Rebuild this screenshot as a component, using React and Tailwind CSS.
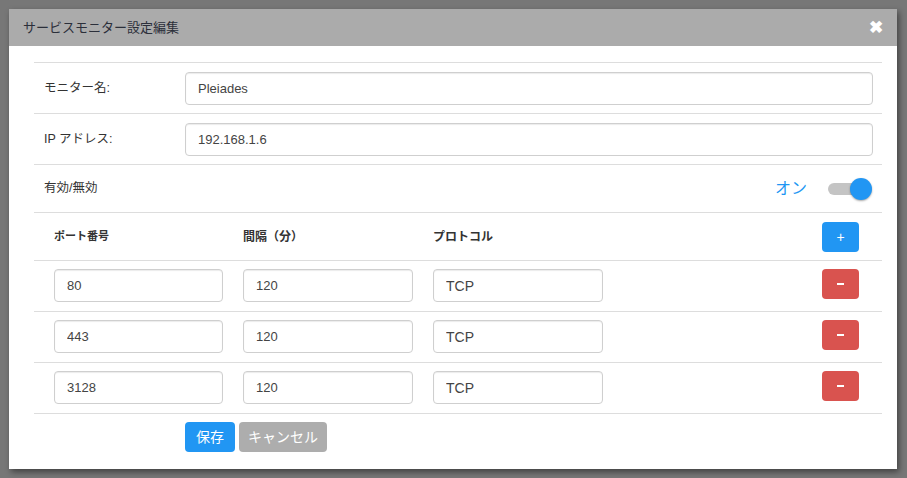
import React from 'react';

const font = { fontFamily: '"Liberation Sans", "Noto Sans CJK JP", sans-serif' };

const ports = [
    { port: '80', interval: '120', protocol: 'TCP' },
    { port: '443', interval: '120', protocol: 'TCP' },
    { port: '3128', interval: '120', protocol: 'TCP' }
];

const inputCls = 'h-[33px] rounded border border-[#cfcfcf] bg-white px-3 text-[13px] text-[#444] shadow-[inset_0_1px_1px_rgba(0,0,0,0.08)] outline-none';

const App = () => {
    return (
        <div className="h-[478px] w-[907px] bg-[#777777] pt-[9px] pl-[9px]" style={font}>
            <div className="w-[888px] h-[460px] bg-white shadow-[2px_3px_6px_rgba(0,0,0,0.45)] overflow-hidden">
                <div className="h-[37px] bg-[#ababab] flex items-center justify-between pl-[14px] pr-[14px]">
                    <span className="text-[13px] text-[#2b2f3a]">サービスモニター設定編集</span>
                    <span className="text-white text-[17px] font-bold leading-none">✖</span>
                </div>

                <div className="pl-[25px] pr-[15px] pt-[16px]">
                    <div className="border-t border-[#dddddd]">
                        <div className="h-[51px] flex items-center border-b border-[#dddddd]">
                            <div className="w-[151px] pl-[10px] text-[12.5px] text-[#333]">モニター名:</div>
                            <input className={`${inputCls} w-[688px]`} defaultValue="Pleiades" />
                        </div>
                        <div className="h-[51px] flex items-center border-b border-[#dddddd]">
                            <div className="w-[151px] pl-[10px] text-[12.5px] text-[#333]">IP アドレス:</div>
                            <input className={`${inputCls} w-[688px]`} defaultValue="192.168.1.6" />
                        </div>
                        <div className="h-[48px] flex items-center border-b border-[#dddddd]">
                            <div className="flex-1 pl-[10px] text-[12.5px] text-[#333]">有効/無効</div>
                            <span className="text-[16px] text-[#2196f3] mr-[21px]">オン</span>
                            <div className="relative w-[44px] h-[22px] mr-[10px] flex items-center">
                                <div className="w-[38px] h-[12px] rounded-full bg-[#c4c4c4]" />
                                <div className="absolute right-0 top-0 w-[22px] h-[22px] rounded-full bg-[#2196f3] shadow-[0_1px_2px_rgba(0,0,0,0.35)]" />
                            </div>
                        </div>

                        <div className="h-[48px] flex items-center border-b border-[#dddddd]">
                            <div className="w-[209px] pl-[20px] text-[11px] font-bold text-[#333]">ポート番号</div>
                            <div className="w-[190px] text-[12px] font-bold text-[#333]">間隔（分）</div>
                            <div className="flex-1 text-[12px] font-bold text-[#333]">プロトコル</div>
                            <button className="w-[37px] h-[30px] mr-[23px] rounded bg-[#2196f3] text-white text-[14px] leading-none">+</button>
                        </div>

                        {ports.map((p, idx) => (
                            <div key={idx} className="h-[51px] flex items-start pt-[8px] border-b border-[#dddddd]">
                                <div className="w-[209px] pl-[20px]">
                                    <input className={`${inputCls} w-[169px]`} defaultValue={p.port} />
                                </div>
                                <div className="w-[190px]">
                                    <input className={`${inputCls} w-[170px]`} defaultValue={p.interval} />
                                </div>
                                <div className="flex-1">
                                    <input className={`${inputCls} w-[170px] text-[14px]`} defaultValue={p.protocol} />
                                </div>
                                <button className="w-[37px] h-[30px] mr-[23px] rounded bg-[#d9534f] flex items-center justify-center">
                                    <span className="block w-[7px] h-[2px] bg-white" />
                                </button>
                            </div>
                        ))}

                        <div className="flex items-center gap-[4px] pl-[151px] pt-[8px]">
                            <button className="h-[30px] w-[50px] rounded bg-[#2196f3] text-white text-[14px]">保存</button>
                            <button className="h-[30px] w-[88px] rounded bg-[#adadad] text-white text-[14px]">キャンセル</button>
                        </div>
                    </div>
                </div>
            </div>
        </div>
    );
};

export default App;
